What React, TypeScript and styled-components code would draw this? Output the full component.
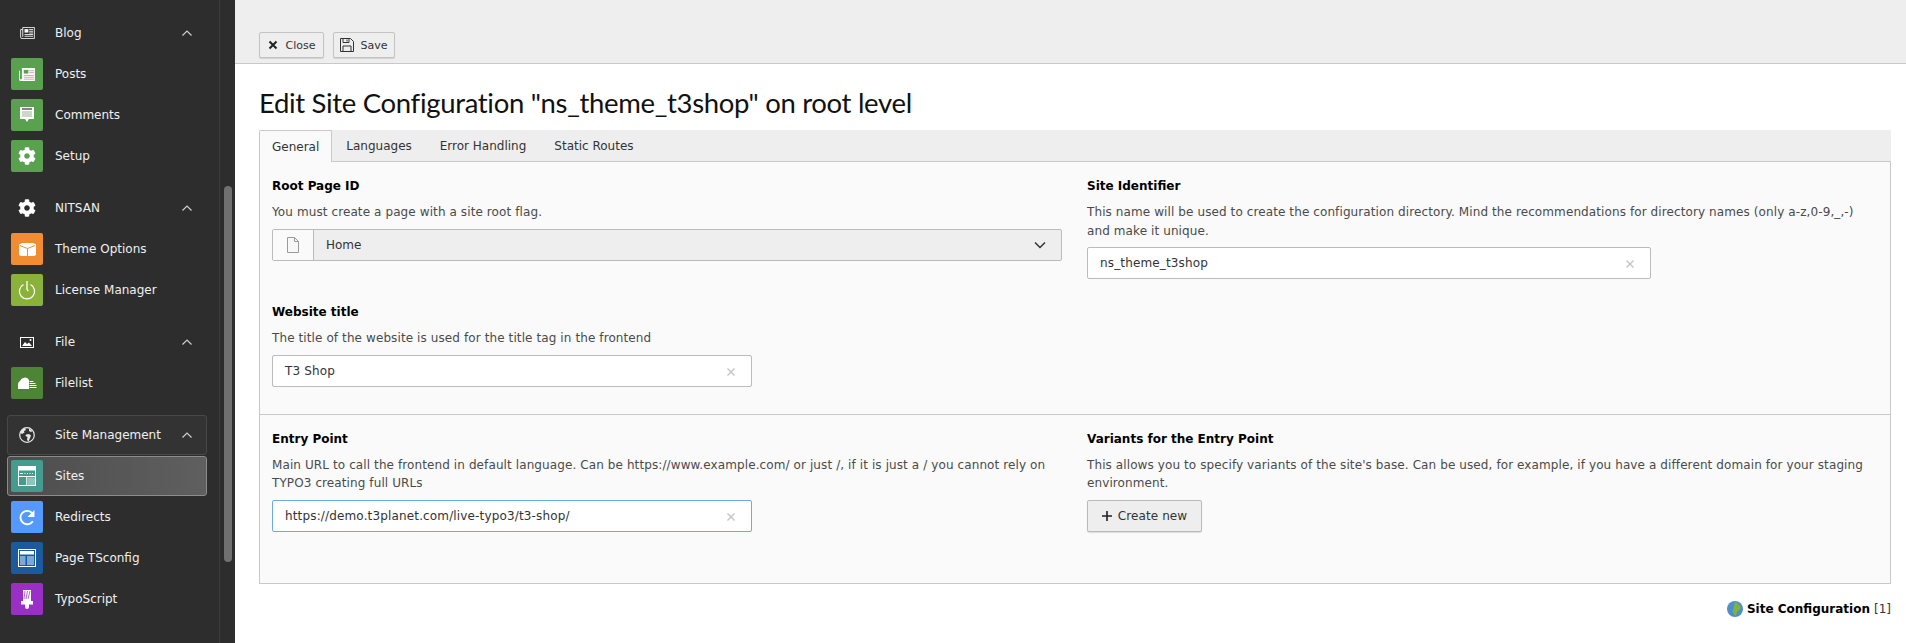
import React from "react";
import styled, { createGlobalStyle } from "styled-components";
import { FaCog } from "react-icons/fa";

const Global = createGlobalStyle`
  html, body { margin: 0; padding: 0; height: 100%; overflow: hidden; background: #fff; }
  #root { height: 100%; }
  * { box-sizing: border-box; }
`;

const Shell = styled.div`
  display: flex;
  width: 1906px;
  height: 643px;
  overflow: hidden;
  font-family: "DejaVu Sans", Verdana, sans-serif;
  font-size: 12px;
  color: #333;
`;

const Sidebar = styled.aside`
  position: relative;
  flex: 0 0 235px;
  height: 643px;
  background: #2d2d2d;
`;

const MenuColumn = styled.nav`
  width: 220px;
  height: 100%;
  padding: 13px 12px 0 7px;
  border-right: 1px solid #3c3c3c;
  display: flex;
  flex-direction: column;
  gap: 12px;
`;

const ScrollThumb = styled.div`
  position: absolute;
  left: 224px;
  top: 186px;
  width: 8px;
  height: 376px;
  border-radius: 4px;
  background: #707070;
`;

const Group = styled.div`
  display: flex;
  flex-direction: column;
  gap: 1px;
`;

const MenuRow = styled.div<{ $variant?: "plain" | "open" | "active" }>`
  display: flex;
  align-items: center;
  height: 40px;
  padding-left: 3px;
  border-radius: 3px;
  color: #f0f0f0;
  font-size: 12px;
  border: 1px solid
    ${(p) => (p.$variant === "open" ? "#484848" : p.$variant === "active" ? "#8c8c8c" : "transparent")};
  background: ${(p) =>
    p.$variant === "open"
      ? "#333333"
      : p.$variant === "active"
      ? "linear-gradient(90deg, #4d4d4d, #5f5f5f)"
      : "transparent"};
`;

const ModuleIcon = styled.span<{ $bg?: string }>`
  flex: 0 0 32px;
  width: 32px;
  height: 32px;
  border-radius: 2px;
  display: flex;
  align-items: center;
  justify-content: center;
  color: #fff;
  background: ${(p) => p.$bg || "transparent"};
`;

const RowLabel = styled.span`
  flex: 1;
  margin-left: 12px;
  white-space: nowrap;
`;

const Chevron = styled.svg`
  flex: 0 0 12px;
  margin-right: 13px;
`;

const Main = styled.main`
  flex: 1;
  display: flex;
  flex-direction: column;
  min-width: 0;
`;

const DocHeader = styled.header`
  height: 64px;
  background: #eeeeee;
  border-bottom: 1px solid #c8c8c8;
  padding: 32px 0 0 24px;
  display: flex;
  align-items: flex-start;
  gap: 9px;
`;

const HeaderButton = styled.button<{ $w: number; $gap: number }>`
  width: ${(p) => p.$w}px;
  height: 26px;
  display: flex;
  align-items: center;
  justify-content: center;
  gap: ${(p) => p.$gap}px;
  padding: 0;
  background: #eeeeee;
  border: 1px solid #c4c4c4;
  border-radius: 2px;
  box-shadow: 0 1px 1px rgba(0, 0, 0, 0.12);
  color: #333;
  font-family: inherit;
  font-size: 11px;
`;

const Body = styled.div`
  padding: 0 15px 0 24px;
`;

const Title = styled.h1`
  margin: 0;
  height: 66px;
  padding-top: 21px;
  font-family: Lato, "Noto Sans", sans-serif;
  font-weight: 400;
  font-size: 27.5px;
  letter-spacing: -0.32px;
  line-height: 36px;
  color: #111;
  white-space: nowrap;
`;

const TabBar = styled.div`
  display: flex;
  height: 32px;
  background: #eeeeee;
  border-bottom: 1px solid #c8c8c8;
`;

const Tab = styled.div<{ $active?: boolean }>`
  height: ${(p) => (p.$active ? "32px" : "31px")};
  padding: 0 14px;
  display: flex;
  align-items: center;
  color: #333;
  ${(p) =>
    p.$active
      ? `background:#fafafa;border:1px solid #c8c8c8;border-bottom:0;border-radius:2px 2px 0 0;padding:0 12px 0 12px;`
      : ``}
`;

const Panel = styled.div`
  background: #fafafa;
  border: 1px solid #c8c8c8;
  border-top: 0;
`;

const Section = styled.section<{ $top: number; $bottom: number }>`
  display: grid;
  grid-template-columns: 790px 1fr;
  column-gap: 25px;
  row-gap: 23px;
  padding: ${(p) => p.$top}px 12px ${(p) => p.$bottom}px;
  & + & {
    border-top: 1px solid #c8c8c8;
  }
`;

const Field = styled.div`
  min-width: 0;
`;

const Label = styled.div`
  height: 20px;
  line-height: 20px;
  font-weight: 700;
  color: #000;
  margin-bottom: 7px;
`;

const Help = styled.div`
  line-height: 18.5px;
  letter-spacing: 0.1px;
  color: #4a4a4a;
  margin-bottom: 7px;
`;

const InputBox = styled.div<{ $w: number; $focus?: boolean }>`
  width: ${(p) => p.$w}px;
  height: 32px;
  display: flex;
  align-items: center;
  justify-content: space-between;
  padding: 0 15px 0 12px;
  letter-spacing: 0.15px;
  background: #fff;
  border: 1px solid ${(p) => (p.$focus ? "#6daae0" : "#bbbbbb")};
  border-radius: 2px;
  color: #333;
`;

const Clear = styled.svg`
  margin-top: 2px;
`;

const SelectBox = styled.div`
  height: 32px;
  width: 790px;
  display: flex;
  align-items: stretch;
  background: #eeeeee;
  border: 1px solid #bbbbbb;
  border-radius: 2px;
  color: #333;
`;

const SelectAddon = styled.div`
  flex: 0 0 41px;
  display: flex;
  align-items: center;
  justify-content: center;
  background: #fafafa;
  border-right: 1px solid #bbbbbb;
`;

const SelectValue = styled.div`
  flex: 1;
  display: flex;
  align-items: center;
  justify-content: space-between;
  padding: 0 15px 0 12px;
`;

const CreateButton = styled.button`
  width: 115px;
  height: 32px;
  display: flex;
  align-items: center;
  justify-content: center;
  gap: 6px;
  padding: 0;
  background: #eeeeee;
  border: 1px solid #bbbbbb;
  border-radius: 2px;
  box-shadow: 0 1px 1px rgba(0, 0, 0, 0.12);
  color: #333;
  font-family: inherit;
  font-size: 12px;
  letter-spacing: 0.1px;
`;

const Footer = styled.div`
  display: flex;
  justify-content: flex-end;
  align-items: center;
  gap: 4px;
  height: 50px;
  color: #333;
`;

const FooterStrong = styled.strong`
  color: #000;
`;

const ChevronUp = () => (
  <Chevron width="12" height="12" viewBox="0 0 12 12" fill="none" stroke="#d0d0d0" strokeWidth="1.2">
    <path d="M1.5 8.5 6 4l4.5 4.5" />
  </Chevron>
);

const XMark = ({ color, size = 10, w = 1.4 }: { color: string; size?: number; w?: number }) => (
  <Clear width={size} height={size} viewBox="0 0 10 10" fill="none" stroke={color} strokeWidth={w}>
    <path d="M1.5 1.5l7 7M8.5 1.5l-7 7" />
  </Clear>
);

const HeaderX = () => (
  <svg width="10" height="10" viewBox="0 0 10 10" fill="none" stroke="#222" strokeWidth="2">
    <path d="M1.5 1.5l7 7M8.5 1.5l-7 7" />
  </svg>
);

const NewsIcon = () => (
  <svg width="15" height="12" viewBox="0 0 17 14">
    <path d="M3 .5h13.5v13H2a1.5 1.5 0 0 1-1.5-1.5V3H3z" fill="none" stroke="currentColor" />
    <rect x="5" y="2.5" width="4.5" height="4" fill="currentColor" />
    <path d="M3 3v8.5M10.500 3H15M10.500 5H15M10.500 7H15M5 8.800h10M5 10.800h10" stroke="currentColor" fill="none" />
  </svg>
);

const PostsIcon = () => (
  <svg width="16" height="13" viewBox="0 0 17 14">
    <path d="M3 0h14v14H2a2 2 0 0 1-2-2V3h1v9h2z" fill="#fff" />
    <rect x="5" y="2" width="5" height="4" fill="#59a14f" />
    <path d="M11 3h5M11 5h5M5 8h11M5 10h11M5 12h11" stroke="#cf9fb0" strokeWidth="1" />
  </svg>
);

const CommentIcon = () => (
  <svg width="14" height="16" viewBox="0 0 14 16">
    <path d="M0 0h14v12H9l-2 3-2-3H0z" fill="#fff" />
    <path d="M2 2h10" stroke="#333" strokeWidth="1.2" />
    <path d="M2 5h10M2 7h10M2 9h10" stroke="#9aaf95" strokeWidth="1" />
  </svg>
);

const BoxIcon = () => (
  <svg width="17" height="15" viewBox="0 0 17 15">
    <path d="M0 2.500 3 1h11l3 1.500V13l-2 1H2l-2-1z" fill="#fff" />
    <path d="M1 3.500 8.500 6.500 16 3.500M8.500 6.500V14" stroke="#f08d32" fill="none" />
  </svg>
);

const PowerIcon = () => (
  <svg width="18" height="20" viewBox="0 0 18 20" fill="none" stroke="#fff">
    <path d="M5.500 4.500a7.600 7.600 0 1 0 7 0" strokeWidth="1.300" />
    <path d="M9 1v9" strokeWidth="1.300" />
    <path d="M9 10.500h1.500" strokeWidth="1.300" />
  </svg>
);

const ImageIcon = () => (
  <svg width="14" height="11" viewBox="0 0 14 11">
    <rect x=".5" y=".5" width="13" height="10" fill="none" stroke="#fff" />
    <path d="M2 9l3-4 2 2 2-1.500L12 9z" fill="#fff" />
    <circle cx="10.500" cy="3" r="1" fill="#fff" />
  </svg>
);

const CloudIcon = () => (
  <svg width="19" height="13" viewBox="0 0 19 13">
    <path d="M0 12V7a4 4 0 0 1 2-3 5 5 0 0 1 9-1v9z" fill="#fff" />
    <path d="M11.500 4.500h4M11.500 6.500h6M11.500 8.500h7M11.500 10.500h7" stroke="#fff" strokeWidth="1" />
  </svg>
);

const GlobeIcon = () => (
  <svg width="16" height="16" viewBox="0 0 16 16">
    <circle cx="8" cy="8" r="7.300" fill="none" stroke="#e8e8e8" strokeWidth="1.200" />
    <path d="M6 1 7 3 5 4 5.500 5.500 3 7 1.500 6 2 4 4 2zM7 7.500 10 7l2 1.500-1 2.500-1.500 3.500L8 13l.5-3-2-1zM10 1.500 13.500 4 12 5 10 4z" fill="#e8e8e8" />
  </svg>
);

const SitesIcon = () => (
  <svg width="18" height="20" viewBox="0 0 18 20">
    <path d="M0 0h18v4.500H0z" fill="#fff" />
    <path d="M.5 4v16M17.500 4v16M8.700 11v9M0 19.500h18M0 10.500h18" stroke="#fff" fill="none" />
    <path d="M2 7.500h3M6.500 7.500h1M9 7.500h1M11.500 7.500h1M14 7.500h1" stroke="#fff" />
    <rect x="9.500" y="11.500" width="7.500" height="7.500" fill="#8fc4bb" />
  </svg>
);

const RedirectIcon = () => (
  <svg width="17" height="17" viewBox="0 0 16 16" fill="none">
    <path d="M13 11.500A6.300 6.300 0 1 1 12.500 4L11 6" stroke="#fff" strokeWidth="1.800" />
    <path d="M14.500 1v6.500H8z" fill="#fff" />
  </svg>
);

const TsconfigIcon = () => (
  <svg width="18" height="18" viewBox="0 0 18 18">
    <rect x=".5" y=".5" width="17" height="17" fill="none" stroke="#fff" />
    <rect x="2" y="2" width="14" height="3.500" fill="#fff" />
    <rect x="2" y="7" width="5.500" height="9" fill="#7fa8d2" />
    <rect x="9" y="7" width="7" height="9" fill="#7fa8d2" />
  </svg>
);

const BrushIcon = () => (
  <svg width="12" height="19" viewBox="0 0 12 19">
    <path d="M2 0h8v11H2z" fill="#fff" />
    <path d="M4 1l-1 8M6.500 1l-1.500 8M9 1l-2 8" stroke="#b06ac8" strokeWidth="1" />
    <path d="M0 11h12v3.500H8V17a2 2 0 0 1-4 0v-2.500H0z" fill="#fff" />
  </svg>
);

const SaveIcon = () => (
  <svg width="14" height="14" viewBox="0 0 14 14" fill="none" stroke="#333">
    <path d="M.5.5h10l3 3v10H.500z" />
    <path d="M3 .5v4h6v-4M7 1.500v2M3 13.500V8h8v5.500" />
  </svg>
);

const PageIcon = () => (
  <svg width="12" height="16" viewBox="0 0 12 16" fill="#f8f8f8" stroke="#9a9a9a">
    <path d="M.5.5h7l4 4v11H.5zM7.500.5v4h4" />
  </svg>
);

const PlusIcon = () => (
  <svg width="10" height="10" viewBox="0 0 10 10" stroke="#222" strokeWidth="1.600">
    <path d="M5 0v10M0 5h10" />
  </svg>
);

const SelectChevron = () => (
  <svg width="12" height="8" viewBox="0 0 12 8" fill="none" stroke="#333" strokeWidth="1.500">
    <path d="M1 1.500 6 6.500l5-5" />
  </svg>
);

const GlobeColor = () => (
  <svg width="16" height="16" viewBox="0 0 16 16">
    <circle cx="8" cy="8" r="8" fill="#4d8fc9" />
    <path d="M8 1c3 0 3 3 5 4s0 3-2 5-1 4-3 5c-1-3-3-3-2-6s1-5 2-8z" fill="#7fb33f" />
  </svg>
);

const Icon = ({ bg, children }: { bg?: string; children: React.ReactNode }) => <ModuleIcon $bg={bg}>{children}</ModuleIcon>;

const Header = ({ icon, label, variant }: { icon: React.ReactNode; label: string; variant?: "open" }) => (
  <MenuRow $variant={variant}>
    <Icon>{icon}</Icon>
    <RowLabel>{label}</RowLabel>
    <ChevronUp />
  </MenuRow>
);

const Item = ({ bg, icon, label, active }: { bg: string; icon: React.ReactNode; label: string; active?: boolean }) => (
  <MenuRow $variant={active ? "active" : "plain"}>
    <Icon bg={bg}>{icon}</Icon>
    <RowLabel>{label}</RowLabel>
  </MenuRow>
);

export default function App() {
  return (
    <Shell>
      <Global />
      <Sidebar>
        <MenuColumn>
          <Group>
            <Header icon={<NewsIcon />} label="Blog" />
            <Item bg="#59a14f" icon={<PostsIcon />} label="Posts" />
            <Item bg="#59a14f" icon={<CommentIcon />} label="Comments" />
            <Item bg="#59a14f" icon={<FaCog size={18} />} label="Setup" />
          </Group>
          <Group>
            <Header icon={<FaCog size={18} />} label="NITSAN" />
            <Item bg="#f08d32" icon={<BoxIcon />} label="Theme Options" />
            <Item bg="#8ab139" icon={<PowerIcon />} label="License Manager" />
          </Group>
          <Group>
            <Header icon={<ImageIcon />} label="File" />
            <Item bg="#4e8436" icon={<CloudIcon />} label="Filelist" />
          </Group>
          <Group>
            <Header icon={<GlobeIcon />} label="Site Management" variant="open" />
            <Item bg="#459b8d" icon={<SitesIcon />} label="Sites" active />
            <Item bg="#5599ff" icon={<RedirectIcon />} label="Redirects" />
            <Item bg="#1b5a9c" icon={<TsconfigIcon />} label="Page TSconfig" />
            <Item bg="#9a2fc8" icon={<BrushIcon />} label="TypoScript" />
          </Group>
        </MenuColumn>
        <ScrollThumb />
      </Sidebar>
      <Main>
        <DocHeader>
          <HeaderButton $w={65} $gap={8}>
            <HeaderX />
            Close
          </HeaderButton>
          <HeaderButton $w={62} $gap={6}>
            <SaveIcon />
            Save
          </HeaderButton>
        </DocHeader>
        <Body>
          <Title>Edit Site Configuration "ns_theme_t3shop" on root level</Title>
          <TabBar>
            <Tab $active>General</Tab>
            <Tab>Languages</Tab>
            <Tab>Error Handling</Tab>
            <Tab>Static Routes</Tab>
          </TabBar>
          <Panel>
            <Section $top={14} $bottom={27}>
              <Field>
                <Label>Root Page ID</Label>
                <Help>You must create a page with a site root flag.</Help>
                <SelectBox>
                  <SelectAddon>
                    <PageIcon />
                  </SelectAddon>
                  <SelectValue>
                    Home
                    <SelectChevron />
                  </SelectValue>
                </SelectBox>
              </Field>
              <Field>
                <Label>Site Identifier</Label>
                <Help>
                  This name will be used to create the configuration directory. Mind the recommendations for directory names (only a-z,0-9,_,-) and make it unique.
                </Help>
                <InputBox $w={564}>
                  ns_theme_t3shop
                  <XMark color="#c4c4c4" />
                </InputBox>
              </Field>
              <Field>
                <Label>Website title</Label>
                <Help>The title of the website is used for the title tag in the frontend</Help>
                <InputBox $w={480}>
                  T3 Shop
                  <XMark color="#c4c4c4" />
                </InputBox>
              </Field>
            </Section>
            <Section $top={14} $bottom={51}>
              <Field>
                <Label>Entry Point</Label>
                <Help>
                  Main URL to call the frontend in default language. Can be https://www.example.com/ or just /, if it is just a / you cannot rely on TYPO3 creating full URLs
                </Help>
                <InputBox $w={480} $focus>
                  https://demo.t3planet.com/live-typo3/t3-shop/
                  <XMark color="#c4c4c4" />
                </InputBox>
              </Field>
              <Field>
                <Label>Variants for the Entry Point</Label>
                <Help>
                  This allows you to specify variants of the site's base. Can be used, for example, if you have a different domain for your staging environment.
                </Help>
                <CreateButton>
                  <PlusIcon />
                  Create new
                </CreateButton>
              </Field>
            </Section>
          </Panel>
          <Footer>
            <GlobeColor />
            <FooterStrong>Site Configuration</FooterStrong> [1]
          </Footer>
        </Body>
      </Main>
    </Shell>
  );
}
